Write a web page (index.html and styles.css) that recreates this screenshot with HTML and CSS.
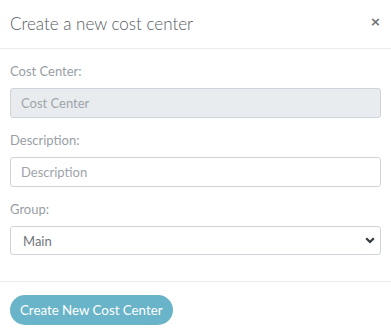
FILE: index.html
```html
<!DOCTYPE html>
<html>
<head>
<meta charset="utf-8">
<link rel="stylesheet" href="styles.css">
</head>
<body>
<div class="modal">
  <div class="modal-header">
    <h5 class="modal-title">Create a new cost center</h5>
    <button class="close" type="button">×</button>
  </div>
  <div class="modal-body">
    <div class="form-group">
      <label class="label">Cost Center:</label>
      <input class="control" type="text" placeholder="Cost Center" disabled>
    </div>
    <div class="form-group">
      <label class="label">Description:</label>
      <input class="control" type="text" placeholder="Description">
    </div>
    <div class="form-group last">
      <label class="label">Group:</label>
      <div class="select-wrap">
        <select class="control select">
          <option>Main</option>
        </select>
        <svg class="chevron" width="10" height="7" viewBox="0 0 10 7"><path d="M1.2 1.2 L5 5 L8.8 1.2" fill="none" stroke="#343a40" stroke-width="2.2"/></svg>
      </div>
    </div>
  </div>
  <div class="modal-footer">
    <button class="btn" type="button">Create New Cost Center</button>
  </div>
</div>
</body>
</html>
```
FILE: styles.css
```css
* { box-sizing: border-box; }
html, body { margin: 0; padding: 0; background: #fff; }
body { font-family: Lato, "Open Sans", sans-serif; }
.modal { width: 391px; }
.modal-header {
  height: 49px;
  display: flex;
  align-items: center;
  justify-content: space-between;
  padding: 0 10px;
  border-bottom: 1px solid #e9ecef;
}
.modal-title {
  margin: 0;
  font-family: Lato, sans-serif;
  font-weight: 300;
  font-size: 17px;
  color: #555b63;
  padding-bottom: 2px;
}
.close {
  border: 0;
  background: none;
  padding: 0;
  font-size: 13px;
  font-weight: 700;
  color: #707070;
  line-height: 1;
  font-family: "DejaVu Sans", sans-serif;
  margin-right: 0;
  margin-bottom: 6px;
}
.modal-body { padding: 13px 10px 26px; }
.form-group { margin-bottom: 13px; }
.form-group.last { margin-bottom: 0; }
.label {
  display: block;
  font-size: 13px;
  line-height: 18px;
  color: #979ea6;
  margin-bottom: 8px;
}
.control {
  display: block;
  width: 100%;
  height: 30px;
  border: 1px solid #ced4da;
  border-radius: 3px;
  padding: 0 10px;
  font-family: Lato, sans-serif;
  font-size: 13px;
  color: #6c757d;
  background: #fff;
  outline: none;
}
.control::placeholder { color: #9ea4aa; }
.control:disabled { background: #e9ecef; }
.select-wrap { position: relative; }
.select {
  -webkit-appearance: none;
  appearance: none;
  height: 29px;
  padding-left: 12px;
  color: #70757c;
}
.chevron { position: absolute; right: 6px; top: 11px; }
.modal-footer {
  border-top: 1px solid #e9ecef;
  padding: 13px 10px 7px;
}
.btn {
  height: 30px;
  border: 0;
  border-radius: 15px;
  background: #69b4c8;
  color: #fff;
  font-family: Lato, sans-serif;
  font-size: 13.3px;
  padding: 0 10px;
}
```
